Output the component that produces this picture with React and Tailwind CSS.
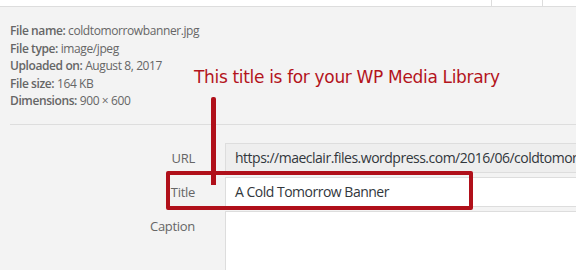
import React from "react";

const details = [
  ["File name:", "coldtomorrowbanner.jpg"],
  ["File type:", "image/jpeg"],
  ["Uploaded on:", "August 8, 2017"],
  ["File size:", "164 KB"],
  ["Dimensions:", "900 × 600"],
];

const App = () => {
  return (
    <div className="relative w-[576px] h-[270px] overflow-hidden bg-[#f3f3f3] font-['Open_Sans',sans-serif]">
      {/* top toolbar strip */}
      <div className="flex h-[7px] bg-white border-b border-[#dddddd]">
        <div className="flex-1" />
        <div className="w-[51px] border-l border-[#dddddd]" />
        <div className="w-[34px] border-l border-[#dddddd]" />
      </div>

      <div className="pl-[10px] pt-[15px]">
        <div className="text-[12px] leading-[17.5px] tracking-[-0.4px] text-[#666666] pb-[14px]">
          {details.map(([label, value]) => (
            <div key={label}>
              <span className="font-semibold">{label}</span> {value}
            </div>
          ))}
        </div>

        <div className="border-t border-[#dddddd] pt-[18px]">
          <div className="grid grid-cols-[185px_1fr] gap-x-[30px] gap-y-[4px] text-[13px] tracking-[-0.3px] text-[#666666]">
            <div className="text-right leading-[30px]">URL</div>
            <div className="h-[30px] bg-[#eeeeee] border border-[#dddddd] border-r-0 pl-[9px] text-[14px] leading-[28px] tracking-[-0.5px] text-[#32373c] whitespace-nowrap overflow-hidden">
              https://maeclair.files.wordpress.com/2016/06/coldtomorrowbanner.jpg
            </div>
            <div className="text-right leading-[30px]">Title</div>
            <div className="h-[30px] bg-white border border-[#dddddd] border-r-0 pl-[9px] text-[14px] leading-[28px] tracking-[-0.5px] text-[#32373c]">
              A Cold Tomorrow Banner
            </div>
            <div className="text-right leading-[30px]">Caption</div>
            <div className="h-[80px] bg-white border border-[#dddddd] border-r-0" />
          </div>
        </div>
      </div>

      {/* annotation */}
      <div className="absolute left-[194px] top-[66px] text-[17px] leading-[22px] tracking-[-0.33px] text-[#b3141c] font-['DejaVu_Sans',sans-serif] whitespace-nowrap">
        This title is for your WP Media Library
      </div>
      <div className="absolute left-[211px] top-[97px] w-[5px] h-[88px] bg-[#b0101a] rounded-t-[2px]" />
      <div className="absolute left-[166px] top-[171px] w-[307px] h-[39px] border-[4px] border-[#b0101a] rounded-[2px]" />
    </div>
  );
};

export default App;
